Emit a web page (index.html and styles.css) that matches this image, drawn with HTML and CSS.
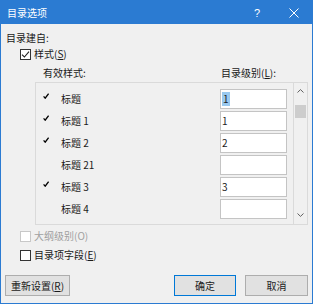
FILE: index.html
```html
<!DOCTYPE html>
<html lang="zh-CN">
<head>
  <meta charset="UTF-8" />
  <title>目录选项</title>
  <link rel="stylesheet" href="styles.css">
</head>
<body>
  <div class="dialog">
    <div class="titlebar">
      <span class="title">目录选项</span>
      <span class="title-btn help">?</span>
      <span class="title-btn close">
        <svg width="10" height="10" viewBox="0 0 10 10"><path d="M0.5 0.5L9.5 9.5M9.5 0.5L0.5 9.5" stroke="#fff" stroke-width="1"/></svg>
      </span>
    </div>

    <div class="content">
      <div class="heading">目录建自:</div>

      <label class="check-row">
        <span class="box">
          <svg width="9" height="9" viewBox="0 0 9 9"><path d="M1 4.6L3.4 7L8 1.6" fill="none" stroke="#222" stroke-width="1.1"/></svg>
        </span>
        <span>样式(<u>S</u>)</span>
      </label>

      <div class="col-labels">
        <span class="lbl-style">有效样式:</span>
        <span class="lbl-level">目录级别(<u>L</u>):</span>
      </div>

      <div class="panel">
        <div class="list">
          <div class="row">
            <span class="tick"><svg width="6" height="6" viewBox="0 0 6 6"><path d="M0.6 3.4L2.2 5.2L5.6 0.6" fill="none" stroke="#000" stroke-width="1.3"/></svg></span>
            <span class="name">标题</span>
            <span class="level"><span class="sel">1</span></span>
          </div>
          <div class="row">
            <span class="tick"><svg width="6" height="6" viewBox="0 0 6 6"><path d="M0.6 3.4L2.2 5.2L5.6 0.6" fill="none" stroke="#000" stroke-width="1.3"/></svg></span>
            <span class="name">标题 1</span>
            <span class="level">1</span>
          </div>
          <div class="row">
            <span class="tick"><svg width="6" height="6" viewBox="0 0 6 6"><path d="M0.6 3.4L2.2 5.2L5.6 0.6" fill="none" stroke="#000" stroke-width="1.3"/></svg></span>
            <span class="name">标题 2</span>
            <span class="level">2</span>
          </div>
          <div class="row">
            <span class="tick"></span>
            <span class="name">标题 21</span>
            <span class="level"></span>
          </div>
          <div class="row">
            <span class="tick"><svg width="6" height="6" viewBox="0 0 6 6"><path d="M0.6 3.4L2.2 5.2L5.6 0.6" fill="none" stroke="#000" stroke-width="1.3"/></svg></span>
            <span class="name">标题 3</span>
            <span class="level">3</span>
          </div>
          <div class="row">
            <span class="tick"></span>
            <span class="name">标题 4</span>
            <span class="level"></span>
          </div>
        </div>
        <div class="scrollbar">
          <span class="arrow up"><svg width="7" height="4" viewBox="0 0 7 4"><path d="M0.5 3.5L3.5 0.6L6.5 3.5" fill="none" stroke="#606060" stroke-width="1"/></svg></span>
          <span class="thumb"></span>
          <span class="track"></span>
          <span class="arrow down"><svg width="7" height="4" viewBox="0 0 7 4"><path d="M0.5 0.5L3.5 3.4L6.5 0.5" fill="none" stroke="#606060" stroke-width="1"/></svg></span>
        </div>
      </div>

      <label class="check-row disabled">
        <span class="box"></span>
        <span>大纲级别(O)</span>
      </label>

      <label class="check-row second">
        <span class="box"></span>
        <span>目录项字段(<u>E</u>)</span>
      </label>
    </div>

    <div class="buttons">
      <button class="btn reset">重新设置(<u>R</u>)</button>
      <div class="btn-group">
        <button class="btn ok">确定</button>
        <button class="btn cancel">取消</button>
      </div>
    </div>
  </div>
</body>
</html>
```

FILE: styles.css
```css
:root {
  --blue: #2b7bd2;
  --face: #f0f0f0;
  --text: #1a1a1a;
}
body {
  margin: 0;
  font-family: "Noto Sans CJK SC", sans-serif;
  font-size: 10px;
  color: var(--text);
}
.dialog {
  width: 313px;
  height: 304px;
  box-sizing: border-box;
  border: 1px solid var(--blue);
  background: var(--face);
  display: flex;
  flex-direction: column;
}
.titlebar {
  height: 23px;
  background: var(--blue);
  color: #fff;
  display: flex;
  align-items: center;
  padding-left: 6px;
}
.title {
  flex: 1;
  line-height: 14px;
}
.title-btn {
  display: flex;
  align-items: center;
  justify-content: center;
  height: 23px;
}
.help {
  width: 20px;
  margin-right: 12px;
  font-family: "Liberation Sans", sans-serif;
  font-size: 11px;
}
.close {
  width: 30px;
  margin-right: 3px;
}
.content {
  padding: 7px 4px 0 5px;
  display: flex;
  flex-direction: column;
}
.heading {
  line-height: 14px;
}
.check-row {
  display: flex;
  align-items: center;
  gap: 3px;
  margin: 2px 0 0 14px;
  line-height: 14px;
}
.box {
  width: 9px;
  height: 9px;
  border: 1px solid #333;
  background: #fff;
  display: flex;
  align-items: center;
  justify-content: center;
}
.check-row.disabled {
  margin-top: 4px;
  color: #a0a0a0;
}
.check-row.disabled .box {
  border-color: #c8c8c8;
}
.check-row.second {
  margin-top: 5px;
}
.col-labels {
  display: flex;
  margin: 5px 0 0 37px;
  line-height: 14px;
}
.lbl-style {
  width: 178px;
}
.panel {
  margin: 2px 0 0 29px;
  width: 273px;
  height: 143px;
  box-sizing: border-box;
  border: 1px solid #dadada;
  display: flex;
}
.list {
  flex: 1;
  padding: 5px 6px 0 7px;
}
.row {
  height: 22px;
  display: flex;
  align-items: center;
}
.tick {
  width: 18px;
  align-self: flex-start;
  margin-top: 5px;
}
.tick svg {
  display: block;
}
.name {
  flex: 1;
  line-height: 14px;
}
.level {
  width: 64px;
  height: 18px;
  border: 1px solid #c4c4c4;
  background: #fff;
  display: flex;
  align-items: center;
  padding-left: 1px;
  line-height: 14px;
}
.sel {
  background: #99c9ef;
  padding: 0 1px;
}
.scrollbar {
  width: 13px;
  border-left: 1px solid #dadada;
  display: flex;
  flex-direction: column;
  align-items: center;
}
.arrow {
  height: 14px;
  display: flex;
  align-items: center;
}
.arrow.up {
  height: 10px;
  align-items: flex-end;
  margin-bottom: 12px;
}
.thumb {
  width: 11px;
  height: 13px;
  background: #cdcdcd;
}
.track {
  flex: 1;
}
.arrow.down {
  height: 14px;
  margin-bottom: 2px;
}
.buttons {
  margin: 13px 4px 0 4px;
  display: flex;
  justify-content: space-between;
}
.btn-group {
  display: flex;
  gap: 9px;
}
.btn {
  font: inherit;
  color: var(--text);
  height: 21px;
  padding: 0;
  background: #e1e1e1;
  border: 1px solid #adadad;
  line-height: 14px;
}
.reset {
  width: 65px;
}
.ok {
  width: 62px;
  border-color: #0078d7;
}
.cancel {
  width: 63px;
}
```
